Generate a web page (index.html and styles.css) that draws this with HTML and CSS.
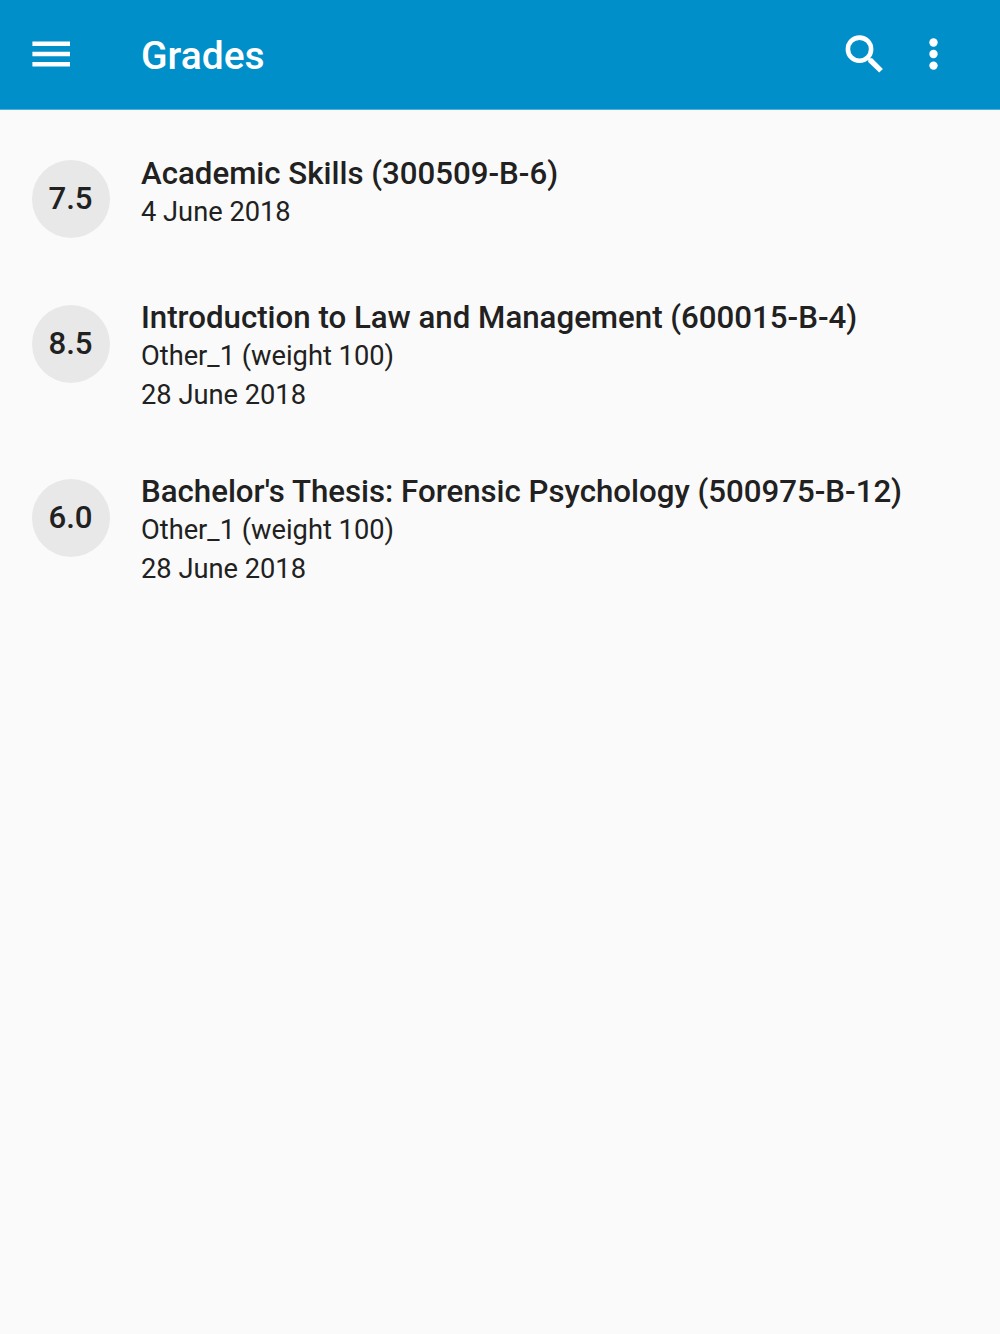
FILE: index.html
```html
<!DOCTYPE html>
<html lang="en">
<head>
  <meta charset="UTF-8">
  <meta name="viewport" content="width=device-width, initial-scale=1.0">
  <title>Grades</title>
  <link rel="stylesheet" href="styles.css">
</head>
<body>
  <header class="toolbar">
    <button class="icon-btn menu" aria-label="Menu">
      <svg viewBox="0 0 52 52"><path d="M7.4 13.4H45v4.6H7.4zM7.4 23.7H45v4.6H7.4zM7.4 34H45v4.6H7.4z"/></svg>
    </button>
    <h1 class="title">Grades</h1>
    <button class="icon-btn search" aria-label="Search">
      <svg viewBox="0 0 52 52"><circle class="ring" cx="21.5" cy="21.2" r="11.6"/><path d="M30.2 31.6v2.4L41.2 44.6 44.9 41.1 34.2 30.3h-2.2L30.5 29l-1.8 1.5z"/></svg>
    </button>
    <button class="icon-btn more" aria-label="More options">
      <svg viewBox="0 0 52 52"><circle cx="26.5" cy="14.5" r="4.2"/><circle cx="26.5" cy="26" r="4.2"/><circle cx="26.5" cy="37.6" r="4.2"/></svg>
    </button>
  </header>

  <main class="grades">
    <div class="grade">
      <div class="score">7.5</div>
      <div class="info">
        <h2 class="course">Academic Skills (300509-B-6)</h2>
        <p class="detail">4 June 2018</p>
      </div>
    </div>
    <div class="grade">
      <div class="score">8.5</div>
      <div class="info">
        <h2 class="course">Introduction to Law and Management (600015-B-4)</h2>
        <p class="detail">Other_1 (weight 100)</p>
        <p class="detail">28 June 2018</p>
      </div>
    </div>
    <div class="grade">
      <div class="score">6.0</div>
      <div class="info">
        <h2 class="course">Bachelor's Thesis: Forensic Psychology (500975-B-12)</h2>
        <p class="detail">Other_1 (weight 100)</p>
        <p class="detail">28 June 2018</p>
      </div>
    </div>
  </main>
</body>
</html>
```

FILE: styles.css
```css
body {
  margin: 0;
  min-height: 100vh;
  background: #fafafa;
  color: #212121;
  font-family: Roboto, sans-serif;
}

/* Toolbar */
.toolbar {
  display: flex;
  align-items: center;
  box-sizing: border-box;
  height: 110px;
  padding: 0 41px 1px 25px;
  border-bottom: 1px solid #4fb0d9;
  background: #008fc9;
  color: #fff;
}

.icon-btn {
  width: 52px;
  height: 52px;
  padding: 0;
  border: none;
  background: none;
}

.icon-btn svg {
  display: block;
  width: 52px;
  height: 52px;
  fill: #fff;
}

.icon-btn .ring {
  fill: none;
  stroke: #fff;
  stroke-width: 4.6;
}

.search {
  margin-right: 17px;
}

.title {
  flex: 1;
  margin: 0 0 0 64px;
  padding-top: 3px;
  font-size: 39px;
  font-weight: 500;
  line-height: 50px;
}

/* Grade list */
.grades {
  padding: 43.5px 31.5px;
}

.grade {
  display: flex;
  gap: 31.5px;
  min-height: 87.5px;
  margin-bottom: 57px;
}

.score {
  flex: none;
  width: 78px;
  height: 78px;
  margin-top: 6.6px;
  border-radius: 50%;
  background: #e8e8e8;
  font-size: 31.2px;
  font-weight: 500;
  line-height: 77px;
  text-align: center;
}

.course {
  margin: 0;
  font-size: 31.23px;
  font-weight: 500;
  line-height: 39px;
  white-space: nowrap;
}

.detail {
  margin: 0;
  font-size: 27.25px;
  line-height: 39px;
}
```
